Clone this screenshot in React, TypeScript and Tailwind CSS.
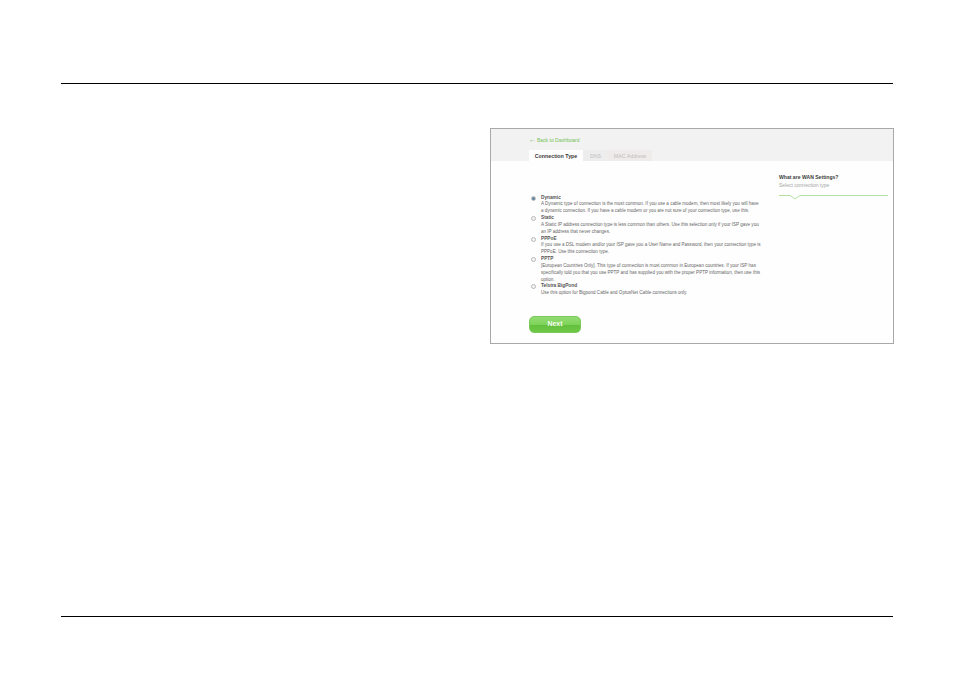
const OPTIONS: { label: string; lines: string[]; checked?: boolean }[] = [
  {
    label: "Dynamic",
    checked: true,
    lines: [
      "A Dynamic type of connection is the most common. If you use a cable modem, then most likely you will have",
      "a dynamic connection. If you have a cable modem or you are not sure of your connection type, use this.",
    ],
  },
  {
    label: "Static",
    lines: [
      "A Static IP address connection type is less common than others. Use this selection only if your ISP gave you",
      "an IP address that never changes.",
    ],
  },
  {
    label: "PPPoE",
    lines: [
      "If you use a DSL modem and/or your ISP gave you a User Name and Password, then your connection type is",
      "PPPoE. Use this connection type.",
    ],
  },
  {
    label: "PPTP",
    lines: [
      "[European Countries Only]. This type of connection is most common in European countries. If your ISP has",
      "specifically told you that you use PPTP and has supplied you with the proper PPTP information, then use this",
      "option.",
    ],
  },
  {
    label: "Telstra BigPond",
    lines: ["Use this option for Bigpond Cable and OptusNet Cable connections only."],
  },
];

function Radio({ checked }: { checked?: boolean }) {
  return (
    <span className="mt-[1px] flex h-[5px] w-[5px] shrink-0 items-center justify-center rounded-full border-[0.5px] border-[#b8b8b8] bg-[#f4f4f4]">
      {checked && <span className="h-[3px] w-[3px] rounded-full bg-[#5b7f9e]" />}
    </span>
  );
}

export default function App() {
  return (
    <div className="flex h-[677px] w-[954px] flex-col bg-white pt-[83px] font-['Liberation_Sans',sans-serif]">
      <div className="mx-[61px] h-px w-[832px] bg-black" />

      <div className="ml-[490px] mt-[44px] h-[216px] w-[404px] border border-[#a8a8a8] bg-[#fefefe]">
        <div className="flex h-[32px] flex-col bg-[#f2f2f2] pl-[38px]">
          <div className="mt-[8px] flex items-center gap-[1px] text-[5px] leading-[6px] text-[#74c255]">
            <span className="text-[7px] leading-[6px]">←</span>
            <span>Back to Dashboard</span>
          </div>
          <div className="mt-[7px] flex h-[11px] text-[5.3px] leading-[12px]">
            <div className="w-[54px] bg-[#fefefe] text-center font-bold text-[#3a3a3a]">Connection Type</div>
            <div className="w-[25px] bg-[#ededed] text-center text-[#bdbdbd]">DNS</div>
            <div className="w-[44px] bg-[#efebea] text-center text-[#bdbdbd]">MAC Address</div>
          </div>
        </div>

        <div className="flex pl-[38px]">
          <div className="w-[250px]">
            <div className="mt-[33.5px] flex flex-col">
              {OPTIONS.map((option) => (
                <div key={option.label} className="flex gap-[5px] pl-[2px]">
                  <Radio checked={option.checked} />
                  <div className="whitespace-nowrap text-[4.56px] leading-[6.85px] text-[#666666]">
                    <div className="text-[4.75px] font-bold text-[#555555]">{option.label}</div>
                    {option.lines.map((line) => (
                      <div key={line}>{line}</div>
                    ))}
                  </div>
                </div>
              ))}
            </div>
            <button className="mt-[18.5px] flex h-[17px] w-[52px] items-center justify-center rounded-[5px] border-[0.5px] border-[#7cc95a] bg-[linear-gradient(#93dc73_0%,#7ed35a_50%,#63bf3c_55%,#6cc846_100%)] text-[7px] font-bold text-[#f4fbef]">
              Next
            </button>
          </div>

          <div className="mt-[12px] w-[109px]">
            <div className="text-[5.1px] font-bold leading-[8px] text-[#3a3a3a]">What are WAN Settings?</div>
            <div className="text-[5px] leading-[8px] text-[#a5a5a5]">Select connection type</div>
            <svg className="mt-[6px] block" width="109" height="5" viewBox="0 0 109 5">
              <path d="M0 .5H11L16 4 21 .5H109" fill="none" stroke="#b5e0a0" strokeWidth="1" />
            </svg>
          </div>
        </div>
      </div>

      <div className="mx-[61px] mt-[272px] h-px w-[832px] bg-black" />
    </div>
  );
}
